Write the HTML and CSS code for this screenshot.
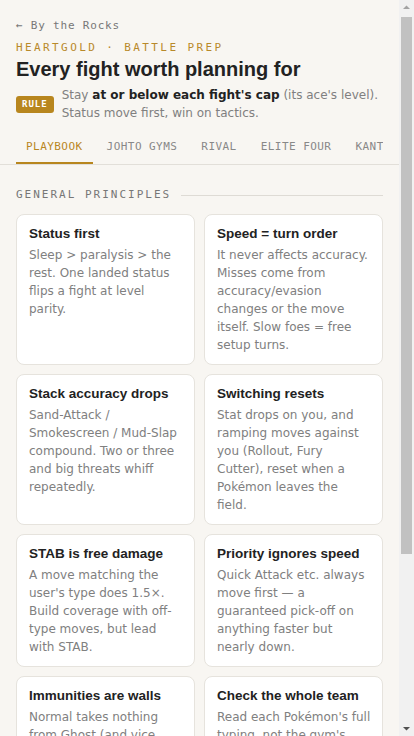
FILE: index.html
```html
<!DOCTYPE html>
<html lang="en">
<head>
  <meta charset="UTF-8">
  <meta name="viewport" content="width=device-width, initial-scale=1.0">
  <title>HeartGold Battle Prep</title>
  <link rel="stylesheet" href="styles.css">
</head>
<body>
<div class="page">

  <header class="top">
    <a class="back" href="#">&larr; By the Rocks</a>
    <p class="eyebrow">HeartGold &middot; Battle Prep</p>
    <h1>Every fight worth planning for</h1>
    <div class="rule">
      <span class="badge">RULE</span>
      <p>Stay <b>at or below each fight's cap</b> (its ace's level). Status move first, win on tactics.</p>
    </div>
  </header>

  <nav class="tabs-wrap">
    <div class="tabs">
      <a class="tab active" href="#">PLAYBOOK</a>
      <a class="tab" href="#">JOHTO GYMS</a>
      <a class="tab" href="#">RIVAL</a>
      <a class="tab" href="#">ELITE FOUR</a>
      <a class="tab" href="#">KANTO GYMS</a>
      <a class="tab" href="#">RED</a>
    </div>
  </nav>

  <main class="content">
    <h2 class="section-title">General Principles</h2>

    <div class="cards">
      <div class="card">
        <h3>Status first</h3>
        <p>Sleep &gt; paralysis &gt; the rest. One landed status flips a fight at level parity.</p>
      </div>
      <div class="card">
        <h3>Speed = turn order</h3>
        <p>It never affects accuracy. Misses come from accuracy/evasion changes or the move itself. Slow foes = free setup turns.</p>
      </div>
      <div class="card">
        <h3>Stack accuracy drops</h3>
        <p>Sand-Attack / Smokescreen / Mud-Slap compound. Two or three and big threats whiff repeatedly.</p>
      </div>
      <div class="card">
        <h3>Switching resets</h3>
        <p>Stat drops on you, and ramping moves against you (Rollout, Fury Cutter), reset when a Pokémon leaves the field.</p>
      </div>
      <div class="card">
        <h3>STAB is free damage</h3>
        <p>A move matching the user's type does 1.5&times;. Build coverage with off-type moves, but lead with STAB.</p>
      </div>
      <div class="card">
        <h3>Priority ignores speed</h3>
        <p>Quick Attack etc. always move first &mdash; a guaranteed pick-off on anything faster but nearly down.</p>
      </div>
      <div class="card">
        <h3>Immunities are walls</h3>
        <p>Normal takes nothing from Ghost (and vice versa). Ground ignores Electric. Flying ignores Ground.</p>
      </div>
      <div class="card">
        <h3>Check the whole team</h3>
        <p>Read each Pokémon's full typing, not the gym's theme. Leaders carry off-type surprises.</p>
      </div>
    </div>
  </main>

</div>

<!-- classic scroll track beside the page -->
<div class="scrollbar">
  <svg class="arrow" width="15" height="15" viewBox="0 0 15 15"><path d="M4 9 L7.5 5.5 L11 9 Z" fill="#a3a3a3"/></svg>
  <div class="thumb-track"><div class="thumb"></div></div>
  <svg class="arrow" width="15" height="15" viewBox="0 0 15 15"><path d="M4 6 L7.5 9.5 L11 6 Z" fill="#505050"/></svg>
</div>
</body>
</html>
```

FILE: styles.css
```css
body {
  font-family: "DejaVu Sans", sans-serif;
  background-color: #f8f6f2;
  color: #222;
  margin: 0;
  padding: 0;
  display: flex;
  height: 100vh;
  overflow: hidden;
}
a {
  text-decoration: none;
}
.page {
  flex: 1;
  min-width: 0;
  overflow-y: auto;
  scrollbar-width: none;
}
.scrollbar {
  flex: none;
  width: 15px;
  display: flex;
  flex-direction: column;
  background-color: #f1f1f1;
}
.arrow {
  flex: none;
  display: block;
}
.thumb-track {
  flex: 1;
  padding: 2px 2px 0;
}
.thumb {
  height: 537px;
  background-color: #c1c1c1;
}
.top {
  padding: 18px 16px 0;
}
.back {
  display: block;
  font-family: "DejaVu Sans Mono", monospace;
  font-size: 11px;
  letter-spacing: 0.8px;
  line-height: 16px;
  color: #777;
}
.eyebrow {
  margin: 6px 0 0;
  font-family: "DejaVu Sans Mono", monospace;
  font-size: 11px;
  letter-spacing: 2.4px;
  line-height: 16px;
  text-transform: uppercase;
  color: #b8892a;
}
h1 {
  margin: 0;
  font-family: "Liberation Sans", Arial, sans-serif;
  font-size: 20px;
  line-height: 26px;
  color: #222;
}
.rule {
  display: flex;
  align-items: center;
  gap: 8px;
  margin-top: 4px;
}
.badge {
  flex: none;
  padding: 0 6px;
  height: 17px;
  line-height: 17px;
  border-radius: 3px;
  background-color: #b8861e;
  color: #fff;
  font-family: "DejaVu Sans Mono", monospace;
  font-size: 9px;
  font-weight: bold;
  letter-spacing: 1px;
}
.rule p {
  margin: 0;
  font-size: 12px;
  line-height: 18px;
  color: #808080;
}
.rule b {
  color: #222;
}
.tabs-wrap {
  margin-top: 7px;
  padding: 0 16px;
  border-bottom: 1px solid #e2dfd9;
}
.tabs {
  display: flex;
  gap: 4px;
  overflow: hidden;
}
.tab {
  flex: none;
  padding: 10px 10px 7px;
  border-bottom: 2px solid transparent;
  font-family: "DejaVu Sans Mono", monospace;
  font-size: 11px;
  letter-spacing: 0.45px;
  line-height: 16px;
  color: #888;
  white-space: nowrap;
}
.tab.active {
  color: #b8861e;
  border-bottom-color: #b8861e;
}
.content {
  padding: 22px 16px 24px;
}
.section-title {
  display: flex;
  align-items: center;
  gap: 10px;
  margin: 0 0 11px;
  font-family: "DejaVu Sans Mono", monospace;
  font-size: 11px;
  font-weight: normal;
  letter-spacing: 2px;
  line-height: 16px;
  text-transform: uppercase;
  color: #777;
}
.section-title::after {
  content: "";
  flex: 1;
  height: 1px;
  background-color: #dedbd5;
}
.cards {
  display: grid;
  grid-template-columns: 1fr 1fr;
  gap: 9px;
}
.card {
  padding: 10px 11px 10px 12px;
  background-color: #fff;
  border: 1px solid #e6e3dd;
  border-radius: 8px;
}
.card h3 {
  margin: 0 0 3px;
  font-family: "Liberation Sans", Arial, sans-serif;
  font-size: 13.5px;
  line-height: 18px;
  color: #222;
}
.card p {
  margin: 0;
  font-size: 12px;
  line-height: 18px;
  color: #808080;
}
```
